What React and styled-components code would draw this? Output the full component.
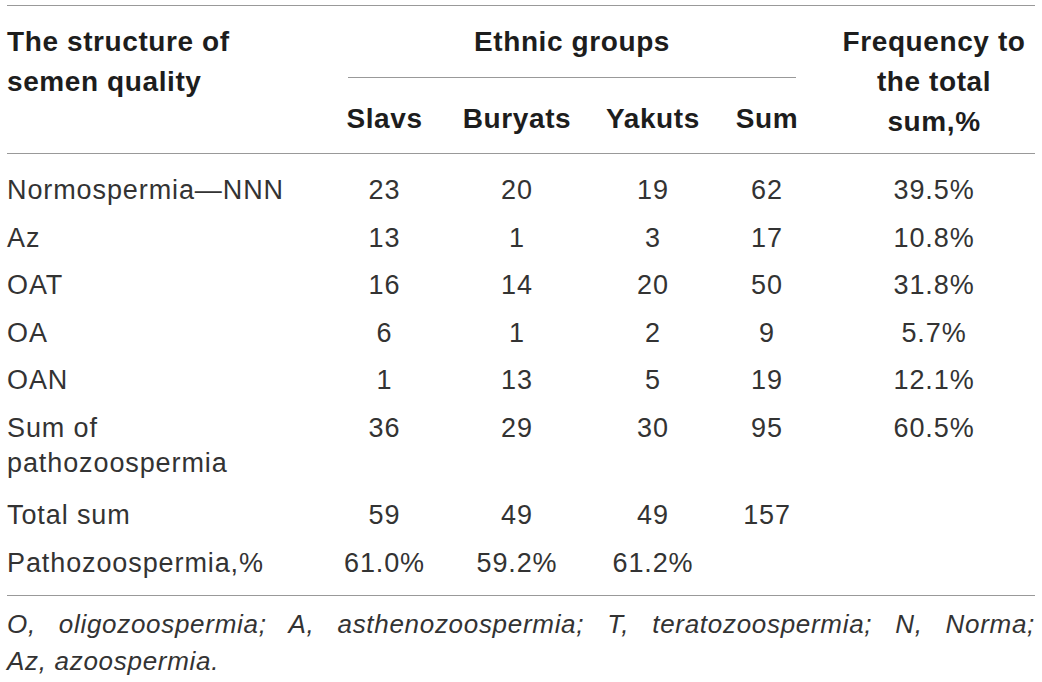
import styled, { createGlobalStyle } from "styled-components";

const rows = [
  { label: ["Normospermia—NNN"], values: ["23", "20", "19", "62", "39.5%"] },
  { label: ["Az"], values: ["13", "1", "3", "17", "10.8%"] },
  { label: ["OAT"], values: ["16", "14", "20", "50", "31.8%"] },
  { label: ["OA"], values: ["6", "1", "2", "9", "5.7%"] },
  { label: ["OAN"], values: ["1", "13", "5", "19", "12.1%"] },
  { label: ["Sum of", "pathozoospermia"], values: ["36", "29", "30", "95", "60.5%"] },
  { label: ["Total sum"], values: ["59", "49", "49", "157", ""] },
  { label: ["Pathozoospermia,%"], values: ["61.0%", "59.2%", "61.2%", "", ""] },
];

const groups = ["Slavs", "Buryats", "Yakuts", "Sum"];
const widths = [333, 89, 176, 96, 132, 202];

export default function App() {
  return (
    <Page>
      <GlobalStyle />
      <Table>
        <colgroup>
          {widths.map((w, i) => (
            <Col key={i} $w={w} />
          ))}
        </colgroup>
        <Thead>
          <tr>
            <Th rowSpan={2} $align="left">
              The structure of
              <br />
              semen quality
            </Th>
            <Th colSpan={4}>
              <GroupTitle>Ethnic groups</GroupTitle>
            </Th>
            <Th rowSpan={2}>
              Frequency to
              <br />
              the total
              <br />
              sum,%
            </Th>
          </tr>
          <tr>
            {groups.map((g) => (
              <SubTh key={g}>{g}</SubTh>
            ))}
          </tr>
        </Thead>
        <tbody>
          {rows.map((r, i) => (
            <BodyRow
              key={r.label.join(" ")}
              $top={i === 0 ? 19 : 6}
              $bottom={i === 5 ? 10.5 : i === rows.length - 1 ? 14 : 6}
            >
              <Td $label>
                {r.label.map((part, j) => (
                  <span key={part}>
                    {j > 0 && <br />}
                    {part}
                  </span>
                ))}
              </Td>
              {r.values.map((v, j) => (
                <Td key={j}>{v}</Td>
              ))}
            </BodyRow>
          ))}
        </tbody>
      </Table>
      <Note>
        <NoteLine $justify>
          O, oligozoospermia; A, asthenozoospermia; T, teratozoospermia; N, Norma;
        </NoteLine>
        <NoteLine>Az, azoospermia.</NoteLine>
      </Note>
    </Page>
  );
}

const GlobalStyle = createGlobalStyle`
  html, body {
    margin: 0;
    background: #fff;
  }
`;

const Page = styled.div`
  padding: 5px 7px 0 7px;
  width: 1028px;
  font-family: "Liberation Sans", Arial, sans-serif;
`;

const Table = styled.table`
  width: 1028px;
  table-layout: fixed;
  border-collapse: collapse;
  border-top: 1px solid #999;
  border-bottom: 1px solid #999;
`;

const Col = styled.col`
  width: ${(p) => p.$w}px;
`;

const Thead = styled.thead`
  border-bottom: 1px solid #999;
`;

const Th = styled.th`
  font-size: 28px;
  font-weight: 700;
  letter-spacing: 0.6px;
  line-height: 40px;
  color: #1d1d1d;
  text-align: ${(p) => p.$align || "center"};
  vertical-align: top;
  padding: 16px 0 0;
`;

const GroupTitle = styled.div`
  margin: 0 37px 0 8px;
  padding-bottom: 15px;
  border-bottom: 1px solid #999;
`;

const SubTh = styled(Th)`
  padding: 21px 0 14px;
`;

const BodyRow = styled.tr`
  & > td {
    padding-top: ${(p) => p.$top}px;
    padding-bottom: ${(p) => p.$bottom}px;
  }
`;

const Td = styled.td`
  font-size: 27px;
  letter-spacing: 0.9px;
  line-height: 35.5px;
  color: #333;
  text-align: ${(p) => (p.$label ? "left" : "center")};
  vertical-align: top;
  padding-left: 0;
  padding-right: 0;
`;

const Note = styled.div`
  margin-top: 10px;
  font-size: 26px;
  font-style: italic;
  letter-spacing: 0.7px;
  line-height: 37px;
  color: #333;
`;

const NoteLine = styled.div`
  text-align: ${(p) => (p.$justify ? "justify" : "left")};
  text-align-last: ${(p) => (p.$justify ? "justify" : "auto")};
`;
